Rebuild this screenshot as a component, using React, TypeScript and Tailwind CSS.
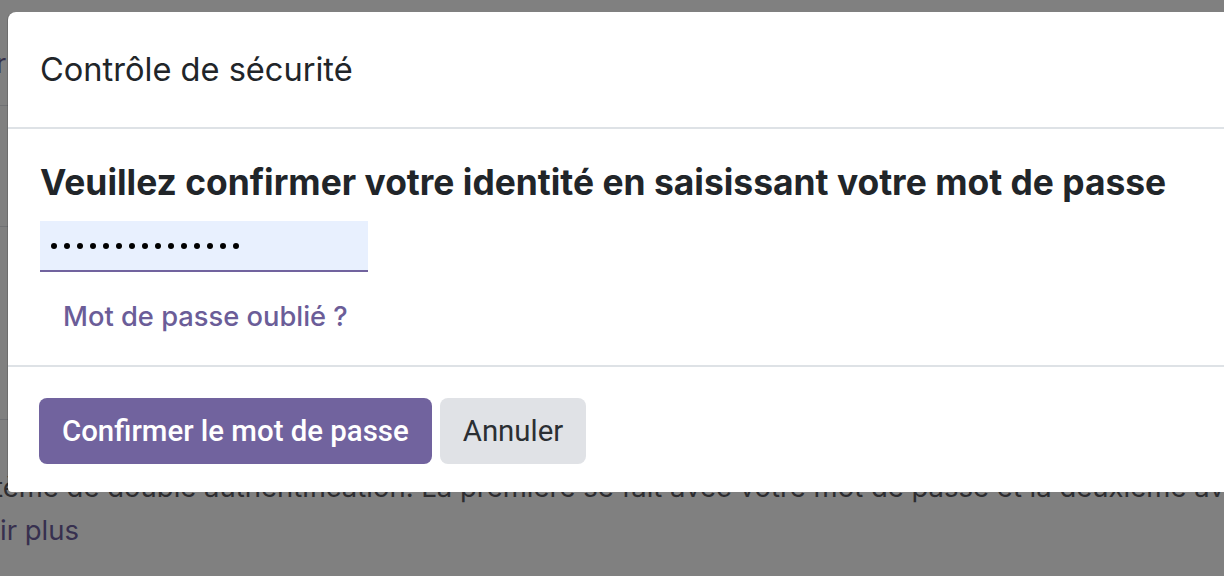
import React from "react";

const inter = { fontFamily: "Inter, 'Noto Sans', Arial, sans-serif" };
const roboto = { fontFamily: "Roboto, 'Noto Sans', Arial, sans-serif" };

export default function App() {
  return (
    <div className="relative w-[1224px] h-[576px] overflow-hidden bg-[#808080]" style={inter}>
      {/* Dimmed page behind the dialog */}
      <div className="flex flex-col">
        <div className="h-[106px] border-b border-[#707174] flex items-center pt-[24px]">
          <span className="text-[27px] text-[#35304a] -ml-[4px]">r</span>
        </div>
        <div className="h-[121px] border-b border-[#707174]" />
        <div className="h-[193px] border-b border-[#707174]" />
        <div className="pt-[48px] text-[27.5px] leading-[38px] text-[#2d2d30] whitespace-nowrap -ml-[6px]">
          tème de double authentification. La première se fait avec votre mot de passe et la deuxième avec
        </div>
        <div className="pt-[5px] text-[27.5px] leading-[38px] text-[#37304f] whitespace-nowrap">ir plus</div>
      </div>

      {/* Dialog */}
      <div className="absolute left-[8px] top-[12px] w-[1240px] h-[480px] bg-white rounded-tl-[8px] rounded-bl-[4px] flex flex-col shadow-[-1px_0_0_rgba(0,0,0,0.15)]">
        <div className="h-[117px] border-b-2 border-[#dee2e6] flex items-center px-8">
          <h4 className="text-[32.6px] text-[#212529] font-normal">Contrôle de sécurité</h4>
        </div>
        <div className="h-[238px] px-8 pt-[34px] flex flex-col items-start border-b-2 border-[#dee2e6]">
          <p className="text-[35.4px] leading-[40px] font-bold text-[#212529] whitespace-nowrap">
            Veuillez confirmer votre identité en saisissant votre mot de passe
          </p>
          <div className="mt-[18px] w-[328px] h-[51px] bg-[#e8f0fe] border-b-2 border-[#71639e] flex items-center pl-[11px] gap-[7px]">
            {Array.from({ length: 15 }).map((_, i) => (
              <span key={i} className="w-[6px] h-[6px] rounded-full bg-black" />
            ))}
          </div>
          <button className="mt-[26px] ml-[23px] text-[27.3px] leading-[38px] font-medium text-[#6b5d98]">
            Mot de passe oublié ?
          </button>
        </div>
        <div className="flex-1 px-[31px] flex items-center gap-2 pt-[3px]" style={roboto}>
          <button className="h-[66px] px-[23px] rounded-[8px] bg-[#71639e] text-white text-[29.4px] font-medium">
            Confirmer le mot de passe
          </button>
          <button className="h-[66px] px-[23px] rounded-[8px] bg-[#e0e2e6] text-[#2b2f33] text-[29.4px] font-normal">
            Annuler
          </button>
        </div>
      </div>
    </div>
  );
}
